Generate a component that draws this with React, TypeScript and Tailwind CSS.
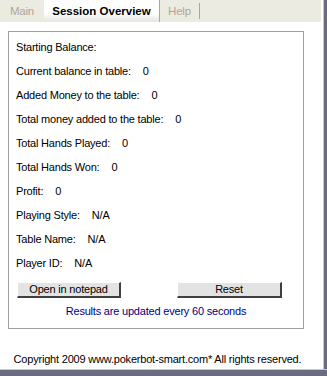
import React from 'react';

const rows: [string, string][] = [
  ['Starting Balance:', ''],
  ['Current balance in table:', '0'],
  ['Added Money to the table:', '0'],
  ['Total money added to the table:', '0'],
  ['Total Hands Played:', '0'],
  ['Total Hands Won:', '0'],
  ['Profit:', '0'],
  ['Playing Style:', 'N/A'],
  ['Table Name:', 'N/A'],
  ['Player ID:', 'N/A'],
];

const btn =
  'h-[16px] flex items-center justify-center bg-[#e3e3e3] border-t border-l border-t-white border-l-white border-r-2 border-b-2 border-r-[#404040] border-b-[#404040] text-black';

export default function App() {
  return (
    <div className="w-[327px] h-[376px] flex flex-col bg-white text-black text-[11px] leading-[13px] tracking-[-0.2px] font-['Liberation_Sans',Arial,sans-serif] overflow-hidden">
      <div className="flex flex-1">
        <div className="flex-1 flex flex-col">
          {/* tabs */}
          <div className="h-[22px] flex bg-[#ecebe2] text-[11.5px]">
            <div className="w-[44px] flex items-center justify-center text-[#aca899]">Main</div>
            <div className="w-[116px] flex items-center justify-center font-bold tracking-[0px] bg-gradient-to-b from-white from-60% to-[#e4e4e0] border-r border-[#a8a8a8]">
              Session Overview
            </div>
            <div className="w-[40px] flex items-center justify-center text-[#aca899] border-r border-[#aca899] my-[3px]">Help</div>
          </div>
          {/* content */}
          <div className="flex-1 flex flex-col pt-[9px] px-[8px]">
            <div className="w-[296px] border border-[#a0a0a0] flex flex-col pt-[3px] pb-[10px] px-[7px]">
              {rows.map(([label, value]) => (
                <div key={label} className="h-[24px] flex items-center gap-[12px]">
                  <span>{label}</span>
                  {value && <span>{value}</span>}
                </div>
              ))}
              <div className="flex justify-between mt-[7px] pl-[1px] pr-[14px]">
                <div className={`${btn} w-[104px]`}>Open in notepad</div>
                <div className={`${btn} w-[105px]`}>Reset</div>
              </div>
              <div className="text-center text-[#000080] mt-[7px]">Results are updated every 60 seconds</div>
            </div>
            <div className="flex-1 flex items-end justify-center pb-[3px] pr-[6px] whitespace-nowrap">
              Copyright 2009 www.pokerbot-smart.com* All rights reserved.
            </div>
          </div>
        </div>
        <div className="w-[2px] bg-white" />
        <div className="w-[1px] bg-[#c8c8d0]" />
        <div className="w-[3px] bg-[#6b6b80]" />
      </div>
      <div className="h-[7px] flex flex-col">
        <div className="h-[1px] bg-[#c8c8d0]" />
        <div className="flex-1 bg-[#6b6b80]" />
      </div>
    </div>
  );
}
